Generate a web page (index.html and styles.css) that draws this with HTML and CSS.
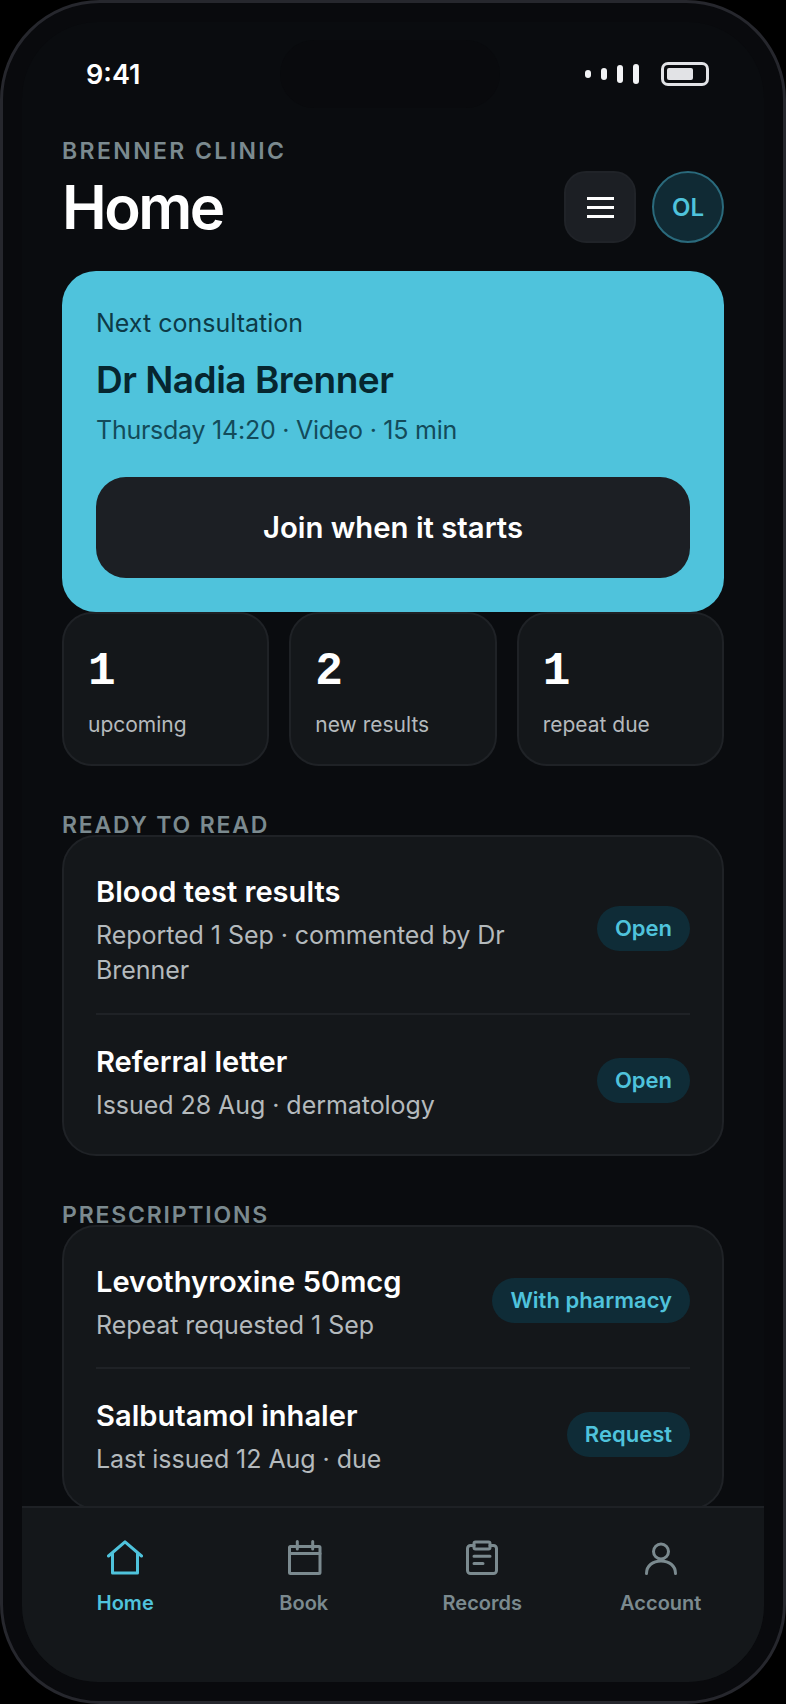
FILE: index.html
```html
<!DOCTYPE html>
<html>

<head>
    <title>Brenner Clinic</title>
    <link rel="stylesheet" href="styles.css">
</head>

<body>
    <div class="phone">
        <div class="screen">
            <div class="status">
                <span class="time">9:41</span>
                <div class="island"></div>
                <div class="signal">
                    <i class="bar1"></i><i class="bar2"></i><i class="bar3"></i><i class="bar4"></i>
                </div>
                <div class="battery"><i></i></div>
            </div>

            <div class="main">
                <div class="header">
                    <div class="headerText">
                        <div class="eyebrow">BRENNER CLINIC</div>
                        <h1>Home</h1>
                    </div>
                    <div class="menuBtn"><i></i><i></i><i></i></div>
                    <div class="avatar">OL</div>
                </div>

                <div class="hero">
                    <div class="heroLabel">Next consultation</div>
                    <div class="heroName">Dr Nadia Brenner</div>
                    <div class="heroSub">Thursday 14:20 · Video · 15 min</div>
                    <div class="heroBtn">Join when it starts</div>
                </div>

                <div class="stats">
                    <div class="stat"><div class="num">1</div><div class="statLabel">upcoming</div></div>
                    <div class="stat"><div class="num">2</div><div class="statLabel">new results</div></div>
                    <div class="stat"><div class="num">1</div><div class="statLabel">repeat due</div></div>
                </div>

                <div class="sectionLabel">READY TO READ</div>
                <div class="card">
                    <div class="row rowTall">
                        <div class="rowText">
                            <div class="rowTitle">Blood test results</div>
                            <div class="rowSub">Reported 1 Sep · commented by Dr Brenner</div>
                        </div>
                        <span class="pill">Open</span>
                    </div>
                    <div class="row">
                        <div class="rowText">
                            <div class="rowTitle">Referral letter</div>
                            <div class="rowSub">Issued 28 Aug · dermatology</div>
                        </div>
                        <span class="pill">Open</span>
                    </div>
                </div>

                <div class="sectionLabel">PRESCRIPTIONS</div>
                <div class="card">
                    <div class="row">
                        <div class="rowText">
                            <div class="rowTitle">Levothyroxine 50mcg</div>
                            <div class="rowSub">Repeat requested 1 Sep</div>
                        </div>
                        <span class="pill">With pharmacy</span>
                    </div>
                    <div class="row">
                        <div class="rowText">
                            <div class="rowTitle">Salbutamol inhaler</div>
                            <div class="rowSub">Last issued 12 Aug · due</div>
                        </div>
                        <span class="pill">Request</span>
                    </div>
                </div>
            </div>

            <div class="tabbar">
                <div class="tab active">
                    <svg viewBox="0 0 36 36"><path d="M1.5 16L18 1.8L34.5 16M5.5 12.5V33H30.5V12.5"/></svg>
                    <span>Home</span>
                </div>
                <div class="tab">
                    <svg viewBox="0 0 36 36"><rect x="3.5" y="6.5" width="30.5" height="27" rx="1"/><path d="M3.5 13.5H34M11.3 1.5V9M26.7 1.5V9"/></svg>
                    <span>Book</span>
                </div>
                <div class="tab">
                    <svg viewBox="0 0 36 36"><path d="M10 5.5H6.5a3 3 0 0 0-3 3V30.5a3 3 0 0 0 3 3H29.5a3 3 0 0 0 3-3V8.5a3 3 0 0 0-3-3H26"/><rect x="10" y="2" width="16" height="7" rx="1.5"/><path d="M10 16.3H26M10 23.5H19"/></svg>
                    <span>Records</span>
                </div>
                <div class="tab">
                    <svg viewBox="0 0 36 36"><circle cx="18" cy="11.5" r="7.5"/><path d="M3.5 33.5C3.5 25.5 10 21 18 21C26 21 32.5 25.5 32.5 33.5"/></svg>
                    <span>Account</span>
                </div>
            </div>
        </div>
    </div>
</body>

</html>
```

FILE: styles.css
```css
* {
    box-sizing: border-box;
}

body {
    margin: 0;
    background-color: #000;
    font-family: Inter, "Liberation Sans", sans-serif;
    color: #fff;
}

.phone {
    width: 786px;
    height: 1704px;
    padding: 19px;
    background-color: #090a0d;
    border: 3px solid #26272d;
    border-radius: 100px;
    overflow: hidden;
}

.screen {
    display: flex;
    flex-direction: column;
    height: 100%;
    background-color: #0a0c0f;
    border-radius: 76px;
    overflow: hidden;
}

/* status bar */
.status {
    position: relative;
    flex: none;
    display: flex;
    align-items: center;
    height: 104px;
    padding: 0 55px 0 64px;
}

.time {
    font-size: 27px;
    font-weight: 600;
    margin-right: auto;
}

.island {
    position: absolute;
    left: 258px;
    top: 18px;
    width: 220px;
    height: 68px;
    border-radius: 34px;
    background-color: #090a0d;
}

.signal {
    display: flex;
    align-items: center;
    gap: 10px;
    margin-right: 22px;
}

.signal i {
    display: block;
    width: 6px;
    border-radius: 3px;
    background-color: #f2f3f5;
}

.bar1 { height: 8px; }
.bar2 { height: 12px; }
.bar3 { height: 18px; }
.bar4 { height: 20px; }

.battery {
    width: 48px;
    height: 24px;
    padding: 3px;
    border: 3px solid #e2e3e6;
    border-radius: 7px;
}

.battery i {
    display: block;
    width: 26px;
    height: 12px;
    border-radius: 2px;
    background-color: #e2e3e6;
}

.main {
    flex: 1;
    min-height: 0;
    padding: 11px 40px 0;
    overflow: hidden;
}

/* header */
.header {
    display: flex;
    align-items: flex-end;
    gap: 16px;
    margin-bottom: 28px;
}

.headerText {
    flex: 1;
}

.eyebrow {
    font-size: 23px;
    line-height: 28px;
    font-weight: 600;
    letter-spacing: 2.4px;
    color: #7b8a8f;
}

h1 {
    margin: 6px 0 0;
    font-size: 60px;
    line-height: 72px;
    font-weight: 600;
    letter-spacing: -2.5px;
}

.menuBtn {
    display: flex;
    flex-direction: column;
    align-items: center;
    justify-content: center;
    gap: 6px;
    width: 72px;
    height: 72px;
    border-radius: 22px;
    border: 2px solid #202328;
    background-color: #1c1f24;
}

.menuBtn i {
    display: block;
    width: 27px;
    height: 3px;
    background-color: #fff;
}

.avatar {
    display: flex;
    align-items: center;
    justify-content: center;
    width: 72px;
    height: 72px;
    border-radius: 50%;
    border: 2px solid #2a6a7c;
    background-color: #102a34;
    color: #4fc3dc;
    font-size: 24px;
    font-weight: 600;
}

/* next consultation */
.hero {
    padding: 36px 34px 34px;
    border-radius: 34px;
    background-color: #4fc3dc;
}

.heroLabel {
    font-size: 25px;
    line-height: 32px;
    color: #0d3a47;
}

.heroName {
    margin-top: 17px;
    font-size: 37px;
    line-height: 48px;
    font-weight: 600;
    letter-spacing: -0.5px;
    color: #06262f;
}

.heroSub {
    margin-top: 9px;
    font-size: 25px;
    line-height: 34px;
    letter-spacing: -0.25px;
    color: #134b5a;
}

.heroBtn {
    display: flex;
    align-items: center;
    justify-content: center;
    height: 101px;
    margin-top: 30px;
    border-radius: 30px;
    background-color: #1c1f24;
    font-size: 29.3px;
    font-weight: 600;
}

.stats {
    display: grid;
    grid-template-columns: repeat(3, 1fr);
    gap: 20px;
}

.stat {
    height: 154px;
    padding: 36px 24px 0;
    border: 2px solid #1f2226;
    border-radius: 30px;
    background-color: #14171a;
}

.num {
    font-family: "Liberation Mono", monospace;
    font-size: 46px;
    line-height: 45px;
    font-weight: 700;
    margin-bottom: -1px;
}

.statLabel {
    margin-top: 17px;
    font-size: 21px;
    line-height: 28px;
    color: #b5babd;
}

.sectionLabel {
    margin-top: 50px;
    font-size: 23px;
    line-height: 19px;
    font-weight: 600;
    letter-spacing: 1.8px;
    color: #7b8a8f;
}

.card {
    padding: 8px 32px 7px;
    border: 2px solid #1f2226;
    border-radius: 34px;
    background-color: #14171a;
}

.row {
    display: flex;
    align-items: center;
    gap: 24px;
    padding: 28px 0 25px;
}

.row + .row {
    border-top: 2px solid #1f2226;
}

.rowTall .rowSub {
    line-height: 35px;
}

.rowText {
    flex: 1;
}

.rowTitle {
    font-size: 29.1px;
    line-height: 38px;
    font-weight: 600;
}

.rowSub {
    margin-top: 7px;
    font-size: 25px;
    line-height: 34px;
    letter-spacing: -0.05px;
    color: #b4babd;
}

.pill {
    flex: none;
    margin-bottom: 5px;
    padding: 0 18px;
    border-radius: 23px;
    background-color: #0f2c37;
    color: #4fc3dc;
    font-size: 22px;
    line-height: 45px;
    font-weight: 600;
}

/* bottom tabs */
.tabbar {
    flex: none;
    display: grid;
    grid-template-columns: repeat(4, 1fr);
    height: 176px;
    padding: 32px 14px 0;
    border-top: 2px solid #1e2125;
    background-color: #14171a;
}

.tab {
    display: flex;
    flex-direction: column;
    align-items: center;
    color: #7b8a8f;
    font-size: 20px;
    line-height: 28px;
    font-weight: 600;
}

.tab svg {
    width: 36px;
    height: 36px;
    margin-bottom: 13px;
    fill: none;
    stroke: currentColor;
    stroke-width: 3;
    stroke-linecap: round;
    stroke-linejoin: round;
}

.tab.active {
    color: #4fc3dc;
}
```
